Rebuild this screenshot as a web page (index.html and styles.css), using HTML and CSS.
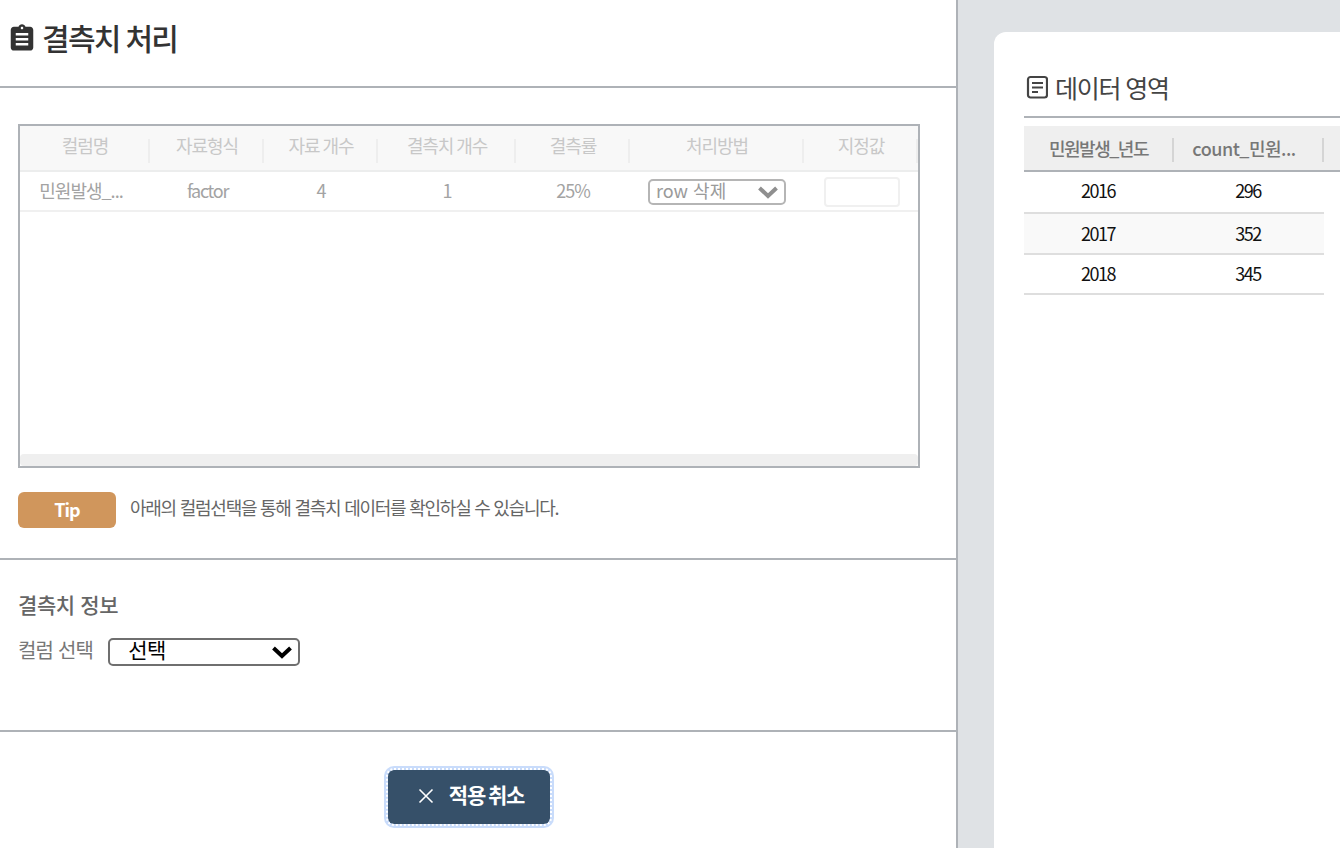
FILE: index.html
```html
<!DOCTYPE html>
<html lang="ko">
<head>
<meta charset="utf-8">
<title>결측치 처리</title>
<link rel="stylesheet" href="styles.css">
</head>
<body>
<div class="page">
  <main class="left">
    <header class="title-bar">
      <svg class="title-icon" viewBox="0 0 24 24" width="30" height="30"><path fill="#333" fill-rule="evenodd" d="M18.500 3h-3.700C14.400 1.800 13.300 1 12 1s-2.400.8-2.800 2H5.500C4.100 3 3 4.100 3 5.500v14C3 20.900 4.100 22 5.500 22h13c1.400 0 2.500-1.100 2.500-2.500v-14C21 4.100 19.900 3 18.500 3zM12 3c.6 0 1 .4 1 1s-.4 1-1 1-1-.4-1-1 .4-1 1-1zm5 15H7v-2h10v2zm0-4H7v-2h10v2zm0-4H7V8h10v2z"/></svg>
      <h1 class="title">결측치 처리</h1>
    </header>
    <section class="grid-section">
      <div class="grid-box">
        <div class="g-row g-head">
          <div class="g-cell"><span>컬럼명</span></div>
          <div class="g-cell"><span>자료형식</span></div>
          <div class="g-cell"><span>자료 개수</span></div>
          <div class="g-cell"><span>결측치 개수</span></div>
          <div class="g-cell"><span>결측률</span></div>
          <div class="g-cell"><span>처리방법</span></div>
          <div class="g-cell"><span>지정값</span></div>
        </div>
        <div class="g-row g-body">
          <div class="g-cell"><span class="first-val">민원발생_...</span></div>
          <div class="g-cell"><span class="factor">factor</span></div>
          <div class="g-cell"><span>4</span></div>
          <div class="g-cell"><span>1</span></div>
          <div class="g-cell"><span>25%</span></div>
          <div class="g-cell method">
            <div class="fake-select"><span>row 삭제</span>
              <svg viewBox="0 0 22 14" width="22" height="14"><path d="M2.500 3 11 11l8.500-8" fill="none" stroke="#8f8f8f" stroke-width="4"/></svg>
            </div>
          </div>
          <div class="g-cell input-cell"><div class="fake-input"></div></div>
        </div>
        <div class="g-space"></div>
        <div class="g-scroll"></div>
      </div>
      <div class="tip-row">
        <div class="tip-badge">Tip</div>
        <p class="tip-text">아래의 컬럼선택을 통해 결측치 데이터를 확인하실 수 있습니다.</p>
      </div>
    </section>
    <section class="info-section">
      <h2 class="info-title">결측치 정보</h2>
      <div class="info-row">
        <span class="info-label">컬럼 선택</span>
        <div class="col-select">
          <span>선택</span>
          <svg viewBox="0 0 22 14" width="22" height="14"><path d="M2.500 3 11 11l8.500-8" fill="none" stroke="#000" stroke-width="4"/></svg>
        </div>
      </div>
    </section>
    <footer class="actions">
      <button class="cancel-btn" type="button">
        <svg viewBox="0 0 16 16" width="16" height="16"><path d="M1.500 1.500l13 13m0-13l-13 13" stroke="#fff" stroke-width="1.600" fill="none"/></svg>
        <span>적용 취소</span>
      </button>
    </footer>
  </main>
  <aside class="right">
    <div class="card">
      <div class="card-title">
        <svg viewBox="0 0 22 24" width="22" height="24"><rect x="2" y="2" width="19" height="20.500" rx="2.500" fill="none" stroke="#444" stroke-width="2.200"/><path d="M6 8h11M6 12.500h11M6 17h6" stroke="#444" stroke-width="2"/></svg>
        <h2>데이터 영역</h2>
      </div>
      <div class="data-table">
        <div class="d-head">
          <div class="d-h"><span class="d-year">민원발생_년도</span></div>
          <div class="d-h"><span class="d-count">count_민원...</span></div>
          <div class="d-h d-rest"></div>
        </div>
        <div class="d-row"><div>2016</div><div>296</div></div>
        <div class="d-row alt"><div>2017</div><div>352</div></div>
        <div class="d-row"><div>2018</div><div>345</div></div>
      </div>
    </div>
  </aside>
</div>
</body>
</html>
```
FILE: styles.css
```css
* { box-sizing: border-box; }
html, body { margin: 0; height: 100%; overflow: hidden; }
body { font-family: "Noto Sans CJK KR", "Noto Sans", sans-serif; background: #fff; }
.page { display: flex; width: 1340px; height: 848px; }
.left { width: 958px; flex: none; border-right: 2px solid #aeb2b7; background: #fff; }
.title-bar { height: 88px; border-bottom: 2px solid #aeb2b7; display: flex; align-items: center; padding: 0 0 13px 7px; gap: 5px; }
.title-icon { flex: none; margin-top: 3px; }
.title { margin: 0; font-size: 30px; line-height: 40px; font-weight: 500; color: #333; letter-spacing: -1.7px; word-spacing: -1px; }
.grid-section { height: 472px; border-bottom: 2px solid #aeb2b7; padding: 36px 0 0 18px; }
.grid-box { width: 902px; height: 344px; border: 2px solid #aeb2b7; display: flex; flex-direction: column; }
.g-row { display: grid; grid-template-columns: 130px 114px 114px 138px 114px 174px 114px; }
.g-head { height: 46px; background: #f8f8f8; border-bottom: 2px solid #eceded; font-size: 18px; color: #c8c8c8; letter-spacing: -1.1px; word-spacing: -1px; }
.g-head .g-cell { position: relative; padding-bottom: 6px; }
.g-head .g-cell::after { content: ""; position: absolute; right: 0; top: 13px; height: 24px; border-right: 2px solid #eeeeee; }
.g-body { height: 40px; border-bottom: 2px solid #f0f0f0; font-size: 18px; color: #a3a3a3; letter-spacing: -1px; }
.g-cell { display: flex; align-items: center; justify-content: center; min-width: 0; line-height: 26px; padding-bottom: 2px; }
.first-val { margin-right: 8px; }
.factor { letter-spacing: -1.3px; margin-left: 1px; }
.method { padding: 2px 0 0 0; }
.fake-select { width: 138px; height: 26px; border: 2px solid #b5b5b5; border-radius: 5px; display: flex; align-items: center; justify-content: space-between; padding: 0 5px 5px 6px; color: #9a9a9a; letter-spacing: 0; font-size: 18px; }
.fake-select svg { margin-top: 5px; }
.input-cell { padding: 2px 0 0 2px; }
.fake-input { width: 76px; height: 30px; border: 2px solid #f0f0f0; border-radius: 4px; background: #fff; }
.g-space { flex: 1; }
.g-scroll { height: 12px; background: #efefef; border-radius: 4px; }
.tip-row { display: flex; align-items: center; margin-top: 24px; gap: 14px; }
.tip-badge { width: 98px; height: 36px; background: #d0965c; border-radius: 6px; color: #fff; font-size: 18px; font-weight: 700; text-align: center; line-height: 34px; letter-spacing: -1px; }
.tip-text { margin: 0; font-size: 18px; line-height: 28px; color: #666; letter-spacing: -1.25px; padding-bottom: 6px; }
.info-section { height: 172px; border-bottom: 2px solid #aeb2b7; padding: 27px 0 0 18px; }
.info-title { margin: 0; font-size: 21px; line-height: 34px; font-weight: 500; color: #666; letter-spacing: -0.4px; }
.info-row { display: flex; align-items: center; gap: 15px; margin-top: 17px; height: 28px; }
.info-label { font-size: 20px; line-height: 30px; color: #777; letter-spacing: -0.8px; padding-bottom: 4px; }
.col-select { width: 192px; height: 28px; border: 2px solid #6f6f6f; border-radius: 5px; display: flex; align-items: center; justify-content: space-between; padding: 0 5px 5px 18px; font-size: 21px; line-height: 21px; color: #000; background: #fff; letter-spacing: -0.5px; }
.col-select svg { margin-top: 5px; }
.actions { display: flex; justify-content: center; padding: 38px 18px 0 0; }
.cancel-btn { width: 162px; height: 54px; border: 0; border-radius: 6px; background: #365069; color: #fff; font-family: inherit; font-size: 21px; font-weight: 700; letter-spacing: -1.1px; word-spacing: -2px; display: flex; align-items: center; justify-content: center; gap: 15px; outline: 2px dotted #fff; outline-offset: 0; box-shadow: 0 0 0 4px #c9dcfb; padding: 0 0 6px 4px; }
.cancel-btn svg { margin-top: 3px; }
.right { flex: 1; min-width: 0; background: #dfe2e5; padding: 32px 0 0 36px; }
.card { height: 816px; background: #fff; border-radius: 12px 0 0 0; padding: 32px 0 0 30px; }
.card-title { display: flex; align-items: center; gap: 7px; height: 54px; border-bottom: 2px solid #aeb2b7; padding: 0 0 7px 2px; }
.card-title svg { flex: none; }
.card-title h2 { margin: 0; font-size: 25px; line-height: 36px; font-weight: 400; color: #444; letter-spacing: -1.2px; word-spacing: -1px; }
.data-table { margin-top: 8px; }
.d-head { display: grid; grid-template-columns: 150px 150px 1fr; height: 46px; background: #efefef; border-bottom: 2px solid #aeb2b7; font-size: 18px; font-weight: 500; color: #777; }
.d-h { position: relative; display: flex; align-items: center; justify-content: center; }
.d-year { letter-spacing: -1.5px; margin-right: 1px; }
.d-count { letter-spacing: -0.5px; margin-right: 10px; }
.d-h:not(.d-rest)::after { content: ""; position: absolute; right: 0; top: 12px; height: 24px; border-right: 2px solid #d5d5d5; }
.d-row { display: grid; grid-template-columns: 150px 150px; width: 300px; height: 40px; border-bottom: 2px solid #dedede; font-size: 18px; color: #111; letter-spacing: -1.5px; }
.d-row div { display: flex; align-items: center; justify-content: center; padding: 0 2px 2px 0; }
.d-row:nth-child(2) { height: 42px; }
.d-row:nth-child(2) div { padding-bottom: 4px; }
.d-row.alt { height: 41px; background: #f9f9f9; }
```
